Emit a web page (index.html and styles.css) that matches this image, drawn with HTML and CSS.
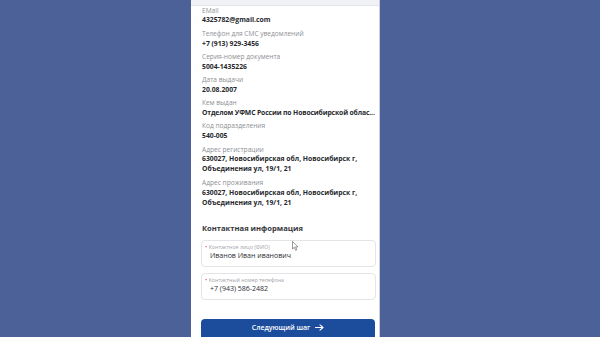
FILE: index.html
```html
<!DOCTYPE html>
<html lang="ru">
<head>
<meta charset="utf-8">
<link rel="stylesheet" href="styles.css">
</head>
<body>
<div class="stage">
  <div class="phone">
    <div class="topstrip"></div>
    <div class="content">
      <div class="field"><div class="lbl">EMail</div><div class="val">4325782@gmail.com</div></div>
      <div class="field"><div class="lbl">Телефон для СМС уведомлений</div><div class="val">+7 (913) 929-3456</div></div>
      <div class="field"><div class="lbl">Серия-номер документа</div><div class="val">5004-1435226</div></div>
      <div class="field"><div class="lbl">Дата выдачи</div><div class="val">20.08.2007</div></div>
      <div class="field"><div class="lbl">Кем выдан</div><div class="val tight">Отделом УФМС России по Новосибирской облас...</div></div>
      <div class="field"><div class="lbl">Код подразделения</div><div class="val">540-005</div></div>
      <div class="field"><div class="lbl">Адрес регистрации</div><div class="val">630027, Новосибирская обл, Новосибирск г,<br>Объединения ул, 19/1, 21</div></div>
      <div class="field"><div class="lbl">Адрес проживания</div><div class="val">630027, Новосибирская обл, Новосибирск г,<br>Объединения ул, 19/1, 21</div></div>
      <div class="heading">Контактная информация</div>
      <div class="input">
        <div class="ilbl"><span class="req">•</span> Контактное лицо (ФИО)</div>
        <div class="ival">Иванов Иван иванович</div>
        <svg class="cursor" width="7" height="10" viewBox="0 0 7 10"><path d="M0.5 0.5 L0.5 8 L2.3 6.3 L3.6 9.3 L4.8 8.8 L3.6 5.9 L6 5.9 Z" fill="#fff" stroke="#555" stroke-width="0.6"/></svg>
      </div>
      <div class="input">
        <div class="ilbl"><span class="req">•</span> Контактный номер телефона</div>
        <div class="ival">+7 (943) 586-2482</div>
      </div>
      <button class="btn">Следующий шаг <svg class="arrow" width="9" height="7" viewBox="0 0 9 7"><path d="M0.5 3.5 H8 M5 0.8 L8 3.5 L5 6.2" fill="none" stroke="#fff" stroke-width="1.1" stroke-linecap="round" stroke-linejoin="round"/></svg></button>
    </div>
  </div>
</div>
</body>
</html>
```

FILE: styles.css
```css
* { box-sizing: border-box; }
html, body { margin: 0; padding: 0; }
body {
  background: #4b6197;
  width: 600px;
  height: 337px;
  overflow: hidden;
  font-family: "Open Sans", "Noto Sans", sans-serif;
}
.stage {
  display: flex;
  justify-content: flex-start;
  padding-left: 191px;
  height: 337px;
}
.phone {
  width: 189px;
  height: 337px;
  background: #ffffff;
  border-right: 1px solid #c9cdd6;
  display: flex;
  flex-direction: column;
}
.topstrip {
  height: 6px;
  background: #eff1f5;
  border-bottom: 1px solid #e3e6ec;
  flex: none;
}
.content {
  padding: 0 3px 0 11px;
  display: flex;
  flex-direction: column;
  position: relative;
}
.field {
  margin-bottom: 3.2px;
}
.lbl {
  font-size: 6.6px;
  line-height: 9.4px;
  color: #8d8f94;
}
.val {
  font-size: 6.8px;
  line-height: 10.5px;
  font-weight: 700;
  color: #26282c;
  white-space: nowrap;
}
.val.tight { letter-spacing: -0.13px; }
.heading {
  margin-top: 11px;
  font-size: 7.6px;
  line-height: 10px;
  font-weight: 700;
  color: #35373b;
}
.input {
  position: relative;
  margin-top: 7px;
  margin-left: -1px;
  width: 175px;
  height: 27px;
  border: 1px solid #e2e4e8;
  border-radius: 4px;
  padding: 3px 0 0 3px;
}
.input + .input { margin-top: 6px; }
.ilbl {
  font-size: 5.3px;
  line-height: 7px;
  color: #a2a4a9;
  white-space: nowrap;
}
.req { color: #e0524f; font-size: 6px; }
.ival {
  font-size: 7px;
  line-height: 10px;
  color: #2c2e33;
  padding-left: 5px;
}
.cursor {
  position: absolute;
  left: 90px;
  top: 0px;
}
.btn {
  margin-top: 19px;
  margin-left: -1px;
  width: 174px;
  height: 26px;
  border: none;
  border-radius: 4px;
  background: #1c4d9c;
  color: #ffffff;
  font-family: "Open Sans", "Noto Sans", sans-serif;
  font-size: 7px;
  font-weight: 600;
  padding: 0 0 8px 0;
  display: flex;
  align-items: center;
  justify-content: center;
  gap: 5px;
}
.arrow { display: block; }
```
